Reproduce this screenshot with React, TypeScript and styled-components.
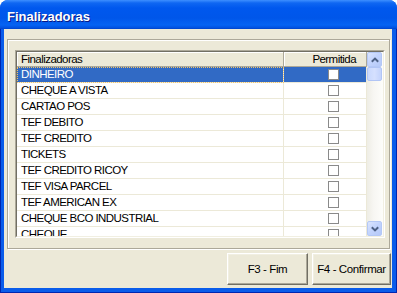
import React from 'react';
import styled, { createGlobalStyle } from 'styled-components';

const Global = createGlobalStyle`
  html, body { margin: 0; padding: 0; background: #ffffff; }
  body { width: 397px; height: 293px; overflow: hidden; }
  * { box-sizing: border-box; }
`;

const UI_FONT = `"Liberation Sans", Arial, sans-serif`;

const Window = styled.div`
  width: 397px;
  height: 293px;
  display: flex;
  flex-direction: column;
  border-radius: 8px 8px 0 0;
  overflow: hidden;
  background: #0a5cea;
`;

const TitleBar = styled.div`
  height: 29px;
  flex: none;
  display: flex;
  align-items: center;
  padding: 3px 0 0 7px;
  background: linear-gradient(
    180deg,
    #3d8fff 0px,
    #0f67f2 3px,
    #0058ee 8px,
    #0056ea 18px,
    #0563f3 25px,
    #0150df 28px,
    #0041c5 29px
  );
  color: #ffffff;
  font: bold 13px "Liberation Sans", Arial, sans-serif;
  text-shadow: 1px 1px 0 #0a1883;
`;

const Frame = styled.div`
  flex: 1;
  display: flex;
  border: 1px solid #0026b0;
  border-top: none;
  padding: 0 4px 4px 3px;
  background: #0a5cea;
`;

const Body = styled.div`
  flex: 1;
  display: flex;
  flex-direction: column;
  background: #ece9d8;
  padding: 10px 0 0 3px;
  font-family: ${UI_FONT};
  font-size: 11.5px;
  letter-spacing: -0.55px;
  color: #000000;
`;

const GroupBox = styled.div`
  height: 210px;
  margin-right: 2px;
  border: 1px solid #aca899;
  box-shadow: inset 1px 1px 0 #ffffff, 1px 1px 0 #ffffff;
  padding: 10px 0 0 7px;
`;

const SunkenOuter = styled.div`
  width: 370px;
  height: 188px;
  border: 1px solid;
  border-color: #aca899 #ffffff #ffffff #aca899;
`;

const SunkenInner = styled.div`
  height: 100%;
  display: flex;
  border: 1px solid;
  border-color: #716f64 #f1efe2 #f1efe2 #716f64;
  background: #ffffff;
  overflow: hidden;
`;

const Table = styled.div`
  width: 350px;
  display: flex;
  flex-direction: column;
  overflow: hidden;
`;

const HeaderRow = styled.div`
  display: grid;
  grid-template-columns: 267px 83px;
  height: 15px;
  flex: none;
`;

const HeaderCell = styled.div<{ $align?: 'left' | 'right' }>`
  background: #ece9d8;
  border-right: 1px solid #aca899;
  border-bottom: 1px solid #aca899;
  box-shadow: inset 1px 1px 0 #ffffff;
  line-height: 14px;
  padding: ${(p) => (p.$align === 'right' ? '0 10px 0 0' : '0 0 0 4px')};
  text-align: ${(p) => p.$align ?? 'left'};
  white-space: nowrap;
`;

const Row = styled.div<{ $selected?: boolean }>`
  display: grid;
  grid-template-columns: 267px 83px;
  height: 16px;
  flex: none;
  background: ${(p) => (p.$selected ? '#316ac5' : '#ffffff')};
  color: ${(p) => (p.$selected ? '#ffffff' : '#000000')};
`;

const NameCell = styled.div<{ $focused?: boolean }>`
  border-right: 1px solid #ece9d8;
  border-bottom: 1px solid #ece9d8;
  line-height: 15px;
  padding-left: 4px;
  white-space: nowrap;
  outline: ${(p) => (p.$focused ? '1px dotted #f3c46b' : 'none')};
  outline-offset: -1px;
`;

const CheckCell = styled.div`
  border-right: 1px solid #ece9d8;
  border-bottom: 1px solid #ece9d8;
  display: flex;
  align-items: center;
  padding-left: 44px;
`;

const CheckBox = styled.span`
  width: 11px;
  height: 11px;
  border: 1px solid #8a8a8a;
  background: #ffffff;
`;

const ScrollBar = styled.div`
  width: 16px;
  flex: none;
  display: flex;
  flex-direction: column;
  background: linear-gradient(90deg, #eeede5 0%, #f7f6f2 40%, #fdfdfa 100%);
`;

const ScrollButton = styled.div`
  width: 15px;
  height: 15px;
  flex: none;
  display: flex;
  align-items: center;
  justify-content: center;
  border: 1px solid #b4c8f6;
  border-radius: 2px;
  background: linear-gradient(135deg, #dbe5fe 0%, #c3d4fd 45%, #b5c9f8 100%);
`;

const ScrollThumb = styled.div`
  width: 15px;
  height: 14px;
  flex: none;
  border: 1px solid #b1c5f5;
  border-radius: 2px;
  background: linear-gradient(90deg, #c9d8fd 0%, #d5e0fe 50%, #c3d3fc 100%);
`;

const ScrollSpacer = styled.div`
  flex: 1;
`;

const ButtonRow = styled.div`
  display: flex;
  justify-content: flex-end;
  gap: 4px;
  margin-top: 4px;
  padding-right: 1px;
`;

const Button = styled.button<{ $w: number }>`
  width: ${(p) => p.$w}px;
  height: 32px;
  padding: 0;
  white-space: nowrap;
  background: #ece9d8;
  border: 1px solid;
  border-color: #ffffff #716f64 #716f64 #ffffff;
  box-shadow: inset -1px -1px 0 #aca899, inset 1px 1px 0 #f1efe2;
  font-family: ${UI_FONT};
  font-size: 11.5px;
  letter-spacing: -0.4px;
  color: #000000;
`;

const Chevron = ({ up }: { up?: boolean }) => (
  <svg width="8" height="6" viewBox="0 0 8 6">
    <polyline
      points={up ? '0.8,4.8 4,1.6 7.2,4.8' : '0.8,1.2 4,4.4 7.2,1.2'}
      fill="none"
      stroke="#4d6185"
      strokeWidth="2"
    />
  </svg>
);

const rows = [
  'DINHEIRO',
  'CHEQUE A VISTA',
  'CARTAO POS',
  'TEF DEBITO',
  'TEF CREDITO',
  'TICKETS',
  'TEF CREDITO RICOY',
  'TEF VISA PARCEL',
  'TEF AMERICAN EX',
  'CHEQUE BCO INDUSTRIAL',
  'CHEQUE',
];

export default function App() {
  return (
    <>
      <Global />
      <Window>
        <TitleBar>Finalizadoras</TitleBar>
        <Frame>
          <Body>
            <GroupBox>
              <SunkenOuter>
                <SunkenInner>
                  <Table>
                    <HeaderRow>
                      <HeaderCell>Finalizadoras</HeaderCell>
                      <HeaderCell $align="right">Permitida</HeaderCell>
                    </HeaderRow>
                    {rows.map((name, i) => (
                      <Row key={name} $selected={i === 0}>
                        <NameCell $focused={i === 0}>{name}</NameCell>
                        <CheckCell>
                          <CheckBox />
                        </CheckCell>
                      </Row>
                    ))}
                  </Table>
                  <ScrollBar>
                    <ScrollButton>
                      <Chevron up />
                    </ScrollButton>
                    <ScrollThumb />
                    <ScrollSpacer />
                    <ScrollButton>
                      <Chevron />
                    </ScrollButton>
                  </ScrollBar>
                </SunkenInner>
              </SunkenOuter>
            </GroupBox>
            <ButtonRow>
              <Button $w={81}>F3 - Fim</Button>
              <Button $w={79}>F4 - Confirmar</Button>
            </ButtonRow>
          </Body>
        </Frame>
      </Window>
    </>
  );
}
